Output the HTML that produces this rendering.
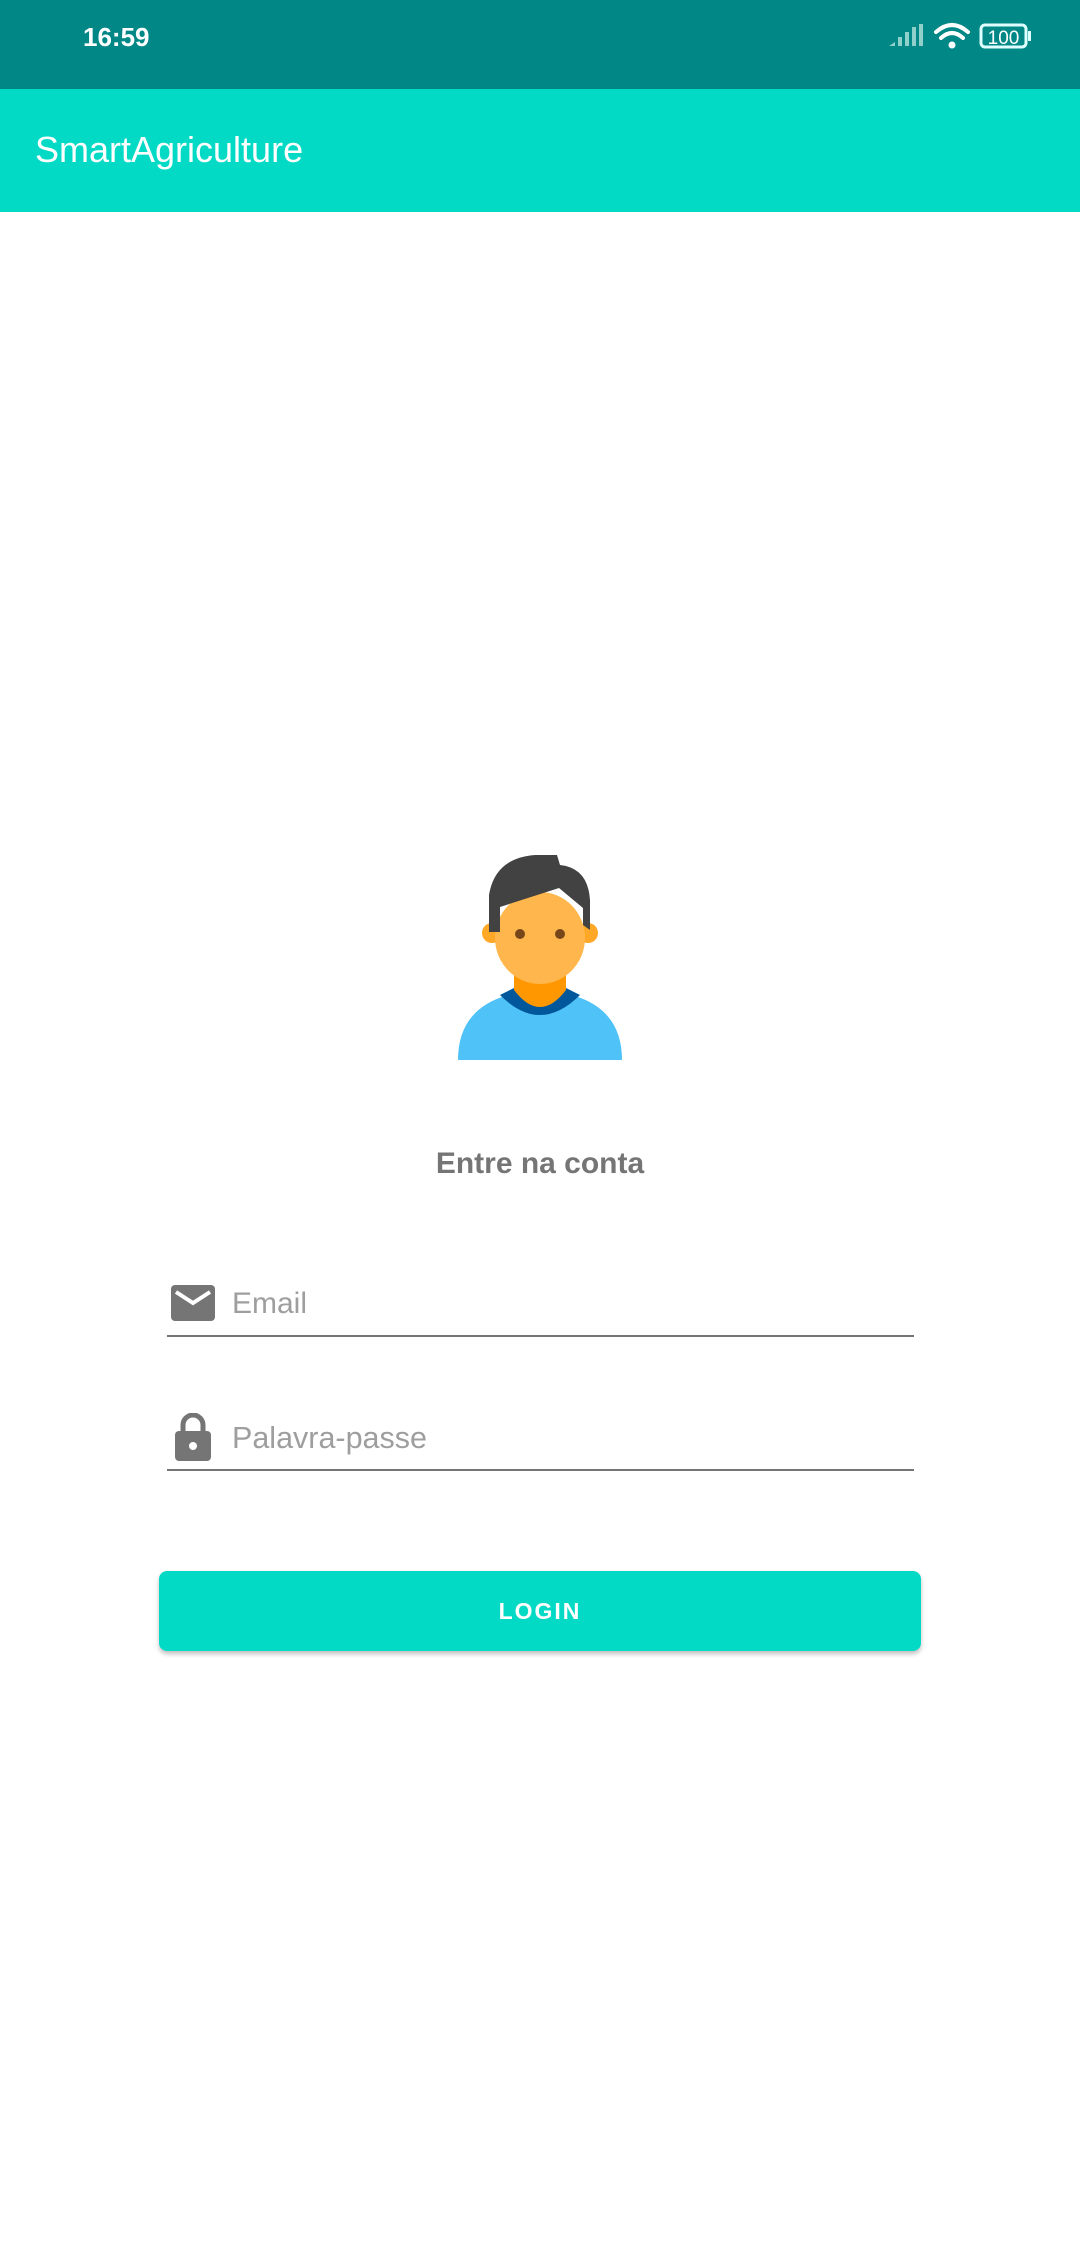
<!DOCTYPE html>
<html><head><meta charset="utf-8"><style>
html,body{margin:0;padding:0;width:1080px;height:2246px;background:#fff;overflow:hidden;font-family:"Liberation Sans",sans-serif;}
.abs{position:absolute;}
</style></head><body>
<div class="abs" style="left:0;top:0;width:1080px;height:89px;background:#018786;"></div>
<div class="abs" style="left:83px;top:20px;color:#fff;font-size:26px;font-weight:bold;line-height:34px;">16:59</div>
<svg class="abs" style="left:880px;top:18px" width="200" height="50" viewBox="0 0 200 50">
<g fill="#8fd0cb"><polygon points="9,28 15,24 15,28"/><rect x="18" y="19" width="4" height="9"/><rect x="25" y="14" width="4" height="14"/><rect x="32" y="9" width="4" height="19" /><rect x="39" y="6" width="4" height="22"/></g>
<g fill="none" stroke="#fff" stroke-width="4" stroke-linecap="round"><path d="M56 14 Q72 0 88 14"/><path d="M61 20 Q72 10 83 20"/></g>
<circle cx="72" cy="27" r="3.5" fill="#fff"/>
<rect x="101" y="7" width="45" height="22" rx="4" fill="none" stroke="#dff" stroke-width="3"/>
<rect x="148" y="13" width="3" height="10" fill="#dff"/>
<text x="123.5" y="26" fill="#fff" font-size="19" text-anchor="middle" font-family="Liberation Sans">100</text>
</svg>
<div class="abs" style="left:0;top:89px;width:1080px;height:123px;background:#03DAC6;"></div>
<div class="abs" style="left:35px;top:130px;color:#fff;font-size:36px;line-height:40px;">SmartAgriculture</div>

<svg class="abs" style="left:440px;top:840px" width="200" height="230" viewBox="440 840 200 230">
<path d="M458 1060 Q458 995 540 990 Q622 995 622 1060 Z" fill="#4fc3f7"/>
<path d="M500 995 Q540 1035 580 995 L566 988 Q540 1010 514 988 Z" fill="#01579b"/>
<path d="M514 965 L566 965 L566 990 Q540 1024 514 990 Z" fill="#ff9800"/>
<circle cx="492" cy="933" r="10" fill="#ffa726"/>
<circle cx="588" cy="933" r="10" fill="#ffa726"/>
<ellipse cx="540" cy="938" rx="45" ry="46" fill="#ffb74d"/>
<path d="M489 932 L489 895 Q495 858 535 855 L557 855 L560 865 Q588 868 590 900 L590 930 L583 925 L583 908 L559 888 L500 907 L500 932 Z" fill="#424242"/>
<circle cx="520" cy="934" r="5" fill="#784719"/>
<circle cx="560" cy="934" r="5" fill="#784719"/>
</svg>

<div class="abs" style="left:0;top:1145px;width:1080px;text-align:center;color:#757575;font-size:30px;font-weight:bold;line-height:38px;">Entre na conta</div>

<svg class="abs" style="left:171px;top:1285px" width="44" height="36" viewBox="0 0 44 36"><rect width="44" height="36" rx="4" fill="#757575"/><path d="M5 7 L22 18 L39 7" fill="none" stroke="#fff" stroke-width="4"/></svg>
<div class="abs" style="left:232px;top:1286px;color:#9e9e9e;font-size:30px;line-height:36px;">Email</div>
<div class="abs" style="left:167px;top:1335px;width:747px;height:2px;background:#757575;"></div>

<svg class="abs" style="left:175px;top:1413px" width="36" height="48" viewBox="0 0 36 48"><path d="M8 20 V12 A10 10 0 0 1 28 12 V20" fill="none" stroke="#757575" stroke-width="5"/><rect x="0" y="18" width="36" height="30" rx="4" fill="#757575"/><circle cx="18" cy="33" r="4" fill="#fff"/></svg>
<div class="abs" style="left:232px;top:1420px;color:#9e9e9e;font-size:30.5px;line-height:36px;">Palavra-passe</div>
<div class="abs" style="left:167px;top:1469px;width:747px;height:2px;background:#757575;"></div>

<div class="abs" style="left:159px;top:1571px;width:762px;height:80px;background:#03DAC6;border-radius:8px;box-shadow:0 3px 5px rgba(0,0,0,0.25);color:#fff;font-size:23px;font-weight:bold;letter-spacing:2px;text-align:center;line-height:80px;">LOGIN</div>
</body></html>
